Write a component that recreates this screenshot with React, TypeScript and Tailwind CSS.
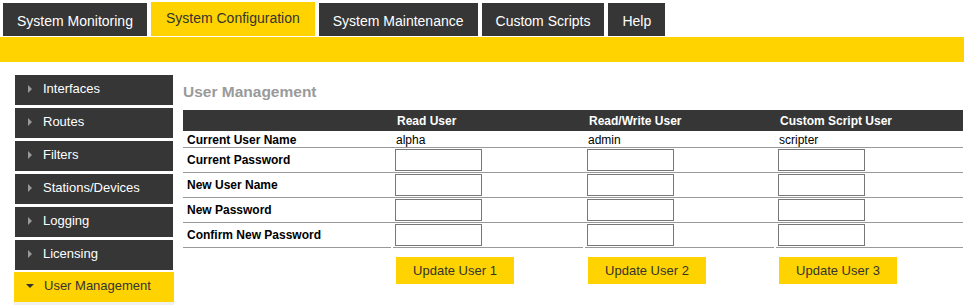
import React from "react";

const tabs = [
	{ label: "System Monitoring", active: false },
	{ label: "System Configuration", active: true },
	{ label: "System Maintenance", active: false },
	{ label: "Custom Scripts", active: false },
	{ label: "Help", active: false },
];

const menu = ["Interfaces", "Routes", "Filters", "Stations/Devices", "Logging", "Licensing"];

const users = [
	{ title: "Read User", name: "alpha", button: "Update User 1" },
	{ title: "Read/Write User", name: "admin", button: "Update User 2" },
	{ title: "Custom Script User", name: "scripter", button: "Update User 3" },
];

const fields = ["Current Password", "New User Name", "New Password", "Confirm New Password"];

const cols = "grid grid-cols-[208px_190px_189px_187px] gap-x-[2px]";

export default function App() {
	return (
		<div className="w-[964px] h-[305px] overflow-hidden bg-white font-['Liberation_Sans',Arial,sans-serif]">
			{/* top tabs */}
			<div className="flex items-end gap-[4px] pl-[3px] h-[36px]">
				{tabs.map((tab) =>
					tab.active ? (
						<div
							key={tab.label}
							className="h-[34px] flex items-center pb-[1px] px-[15px] bg-[#ffd300] text-[14px] text-[#333]"
						>
							{tab.label}
						</div>
					) : (
						<div
							key={tab.label}
							className="h-[33px] flex items-center pt-[3px] px-[14px] bg-[#363636] text-[14px] text-white"
						>
							{tab.label}
						</div>
					),
				)}
			</div>
			<div className="mt-[1px] h-[25px] bg-[#ffd300]"></div>

			<div className="flex items-start">
				{/* side menu */}
				<div className="ml-[15px] mt-[13px] w-[158px]">
					{menu.map((item) => (
						<div
							key={item}
							className="h-[30px] mb-[3px] flex items-center pb-[2px] pl-[13px] bg-[#363636] text-[13px] text-white"
						>
							<span className="w-0 h-0 border-y-[4px] border-y-transparent border-l-[4px] border-l-[#999] mr-[11px]"></span>
							{item}
						</div>
					))}
					<div className="-mx-px -mt-[1px] h-[30px] flex items-center pb-[2px] pl-[12px] bg-[#ffd300] text-[13px] text-[#333]">
						<span className="w-0 h-0 border-x-[4px] border-x-transparent border-t-[4px] border-t-[#333] mr-[10px]"></span>
						User Management
					</div>
					<div className="-mx-px h-10 bg-[#f0f0f0]"></div>
				</div>

				{/* content */}
				<div className="ml-[10px] pt-[21px] w-[780px]">
					<h2 className="text-[15.5px] leading-[18px] font-bold text-[#9a9a9a] mb-[9px]">User Management</h2>

					<div className={`${cols} h-[21px] bg-[#363636] text-[12px] font-bold text-white items-center`}>
						<div></div>
						{users.map((u) => (
							<div key={u.title} className="pl-[4px]">{u.title}</div>
						))}
					</div>

					<div className={`${cols} h-[17px] border-b border-[#999] text-[12px] items-center`}>
						<div className="pl-[4px] font-bold">Current User Name</div>
						{users.map((u) => (
							<div key={u.name} className="pl-[3px]">{u.name}</div>
						))}
					</div>

					{fields.map((f, i) => {
						const last = i === fields.length - 1;
						return (
							<div
								key={f}
								className={`${cols} h-[25px] text-[12px] ${last ? "" : "border-b border-[#999]"}`}
							>
								<div className={`flex items-center pl-[4px] font-bold ${last ? "border-b border-[#999]" : ""}`}>{f}</div>
								{users.map((u) => (
									<div key={u.title} className={`flex items-center pl-[2px] ${last ? "border-b border-[#999]" : ""}`}>
										<input type="password" className="w-[87px] h-[22px] border border-[#777] bg-white outline-none" />
									</div>
								))}
							</div>
						);
					})}

					<div className={`${cols} mt-[9px]`}>
						<div></div>
						{users.map((u) => (
							<div key={u.button} className="pl-[3px]">
								<button className="w-[118px] h-[27px] bg-[#ffd300] text-[13px] text-[#333]">{u.button}</button>
							</div>
						))}
					</div>
				</div>
			</div>
		</div>
	);
}
